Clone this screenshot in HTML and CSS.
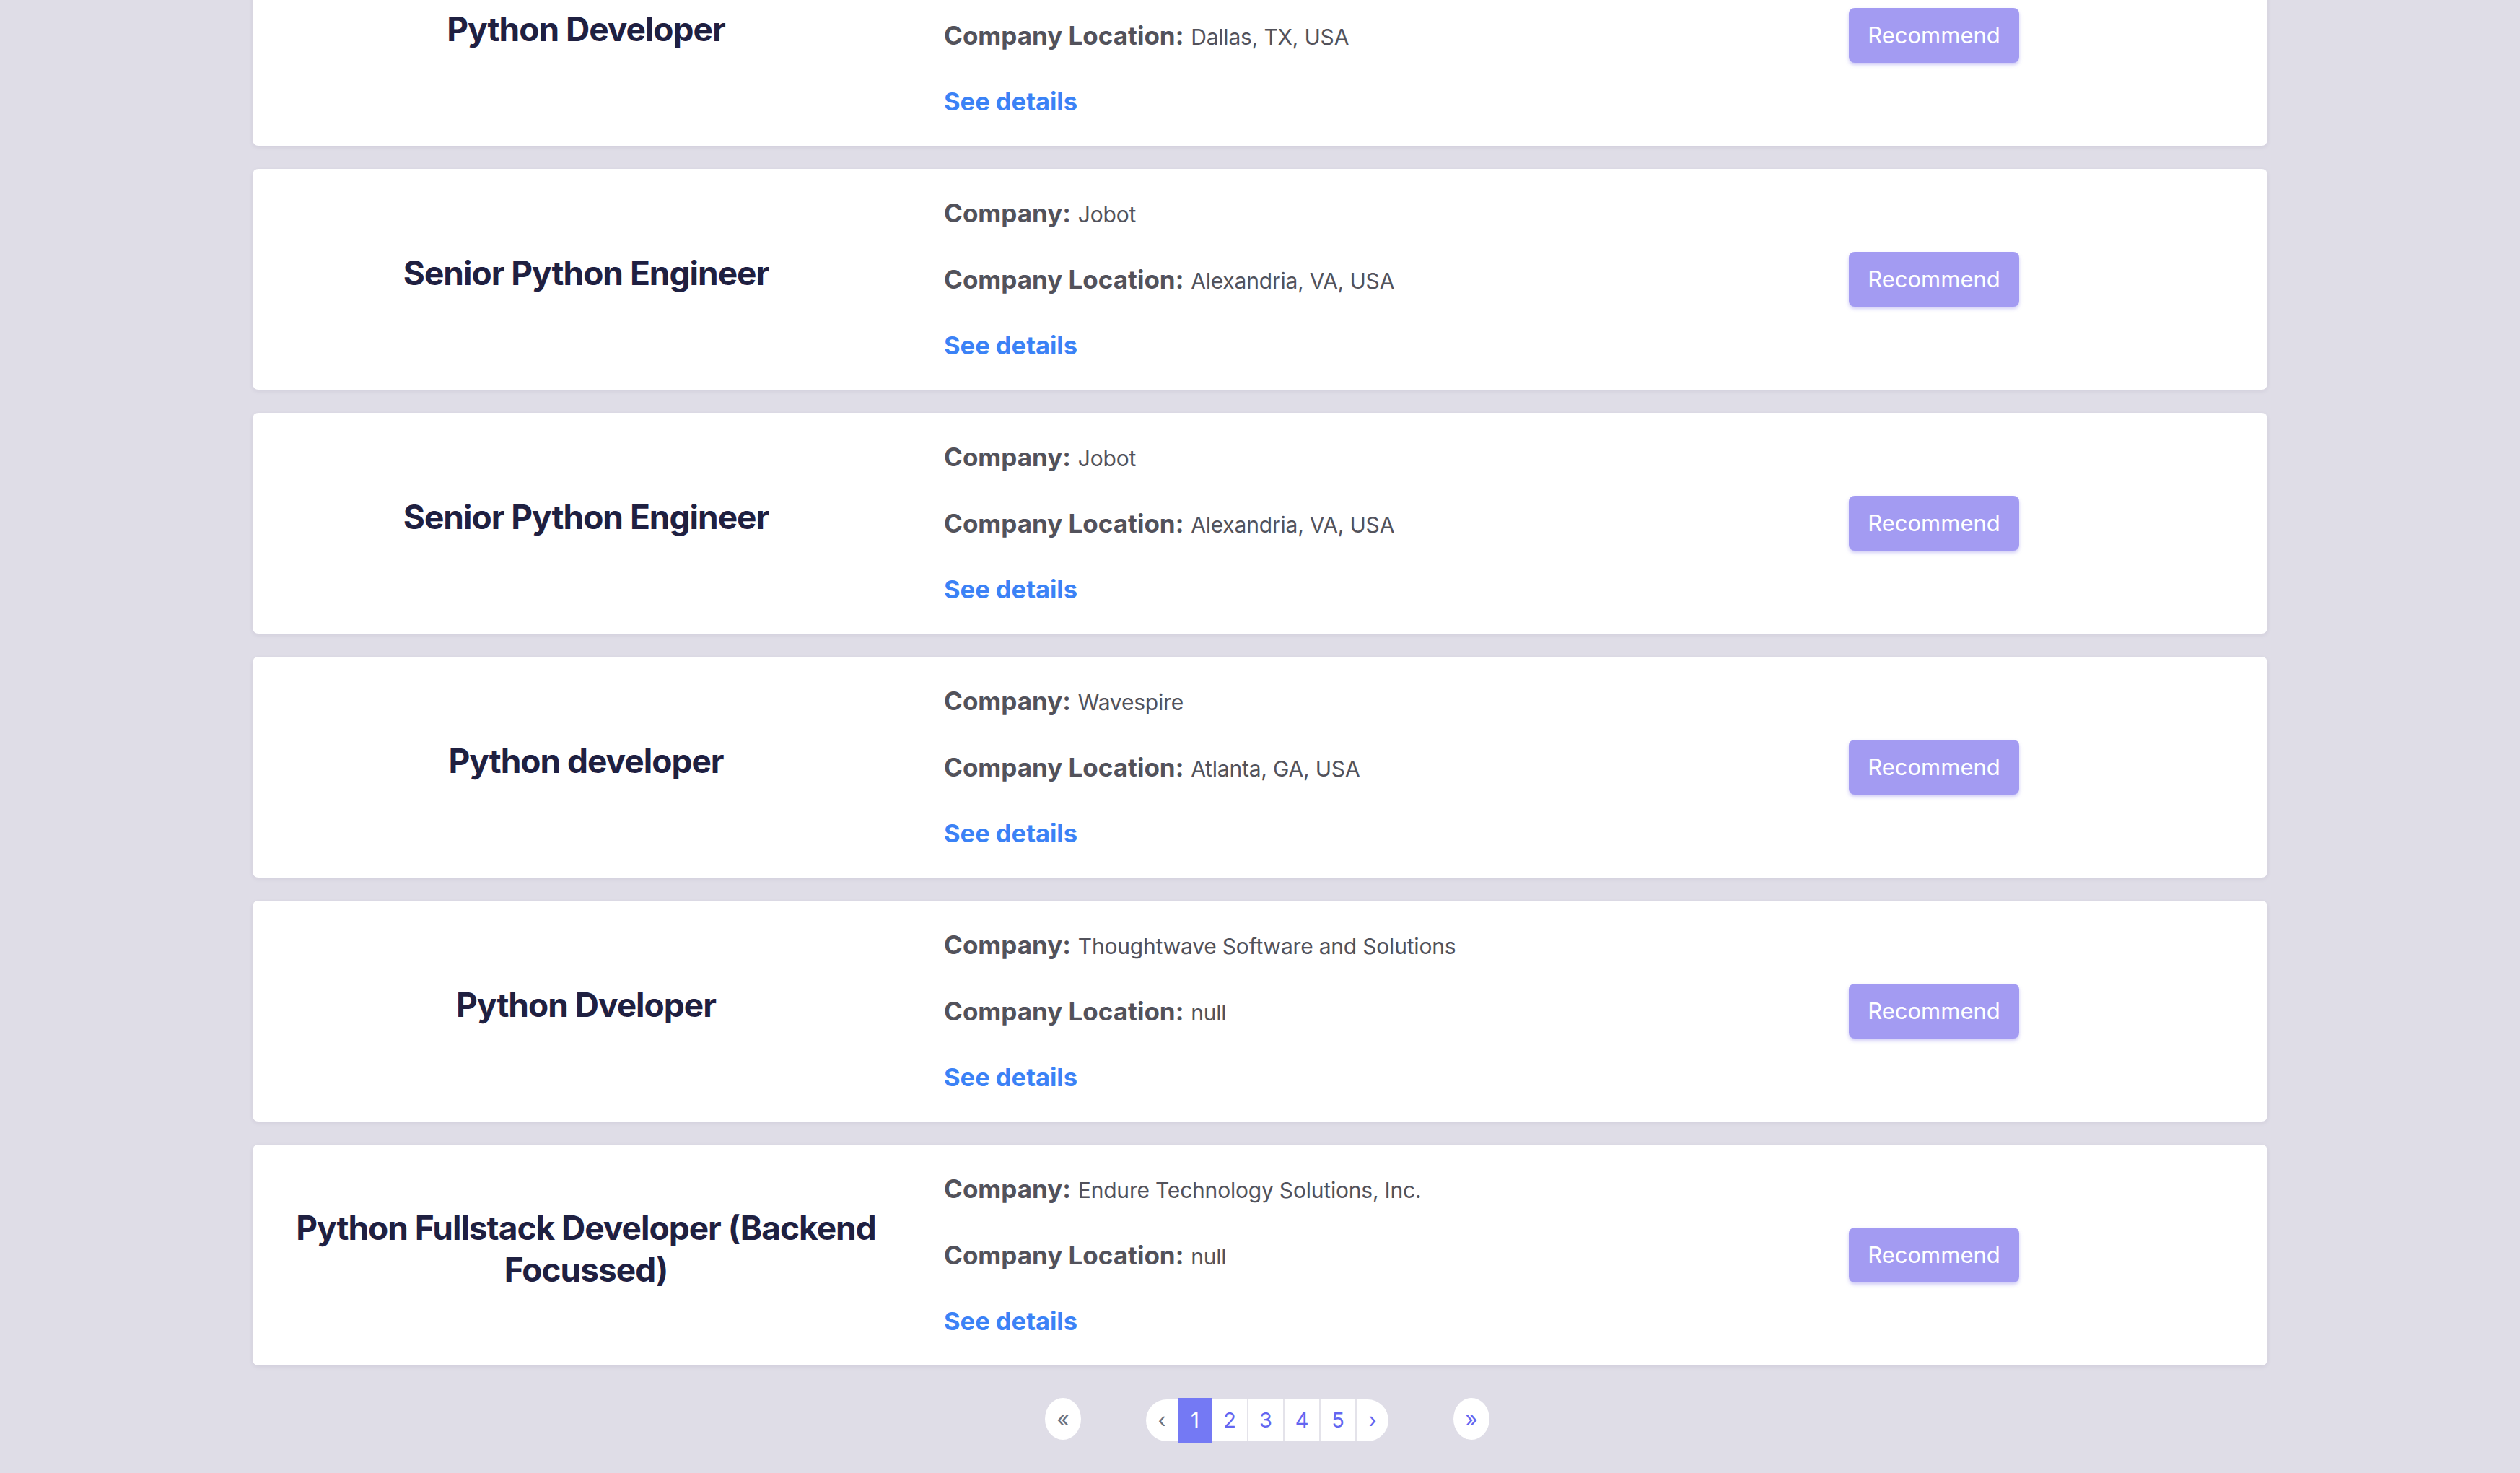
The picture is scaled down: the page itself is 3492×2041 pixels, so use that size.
FILE: index.html
```html
<!DOCTYPE html>
<html lang="en">
<head>
<meta charset="utf-8">
<title>Jobs</title>
<link rel="stylesheet" href="styles.css">
</head>
<body>
<main class="jobs">
  <section class="card">
    <div class="col-title"><h3 class="title">Python Developer</h3></div>
    <div class="col-info">
      <p class="line"><span class="label">Company:</span> <span class="value">Jobot</span></p>
      <p class="line"><span class="label">Company Location:</span> <span class="value">Dallas, TX, USA</span></p>
      <a class="details" href="#">See details</a>
    </div>
    <div class="col-action"><button class="recommend">Recommend</button></div>
  </section>
  <section class="card">
    <div class="col-title"><h3 class="title">Senior Python Engineer</h3></div>
    <div class="col-info">
      <p class="line"><span class="label">Company:</span> <span class="value">Jobot</span></p>
      <p class="line"><span class="label">Company Location:</span> <span class="value">Alexandria, VA, USA</span></p>
      <a class="details" href="#">See details</a>
    </div>
    <div class="col-action"><button class="recommend">Recommend</button></div>
  </section>
  <section class="card">
    <div class="col-title"><h3 class="title">Senior Python Engineer</h3></div>
    <div class="col-info">
      <p class="line"><span class="label">Company:</span> <span class="value">Jobot</span></p>
      <p class="line"><span class="label">Company Location:</span> <span class="value">Alexandria, VA, USA</span></p>
      <a class="details" href="#">See details</a>
    </div>
    <div class="col-action"><button class="recommend">Recommend</button></div>
  </section>
  <section class="card">
    <div class="col-title"><h3 class="title">Python developer</h3></div>
    <div class="col-info">
      <p class="line"><span class="label">Company:</span> <span class="value">Wavespire</span></p>
      <p class="line"><span class="label">Company Location:</span> <span class="value">Atlanta, GA, USA</span></p>
      <a class="details" href="#">See details</a>
    </div>
    <div class="col-action"><button class="recommend">Recommend</button></div>
  </section>
  <section class="card">
    <div class="col-title"><h3 class="title">Python Dveloper</h3></div>
    <div class="col-info">
      <p class="line"><span class="label">Company:</span> <span class="value">Thoughtwave Software and Solutions</span></p>
      <p class="line"><span class="label">Company Location:</span> <span class="value">null</span></p>
      <a class="details" href="#">See details</a>
    </div>
    <div class="col-action"><button class="recommend">Recommend</button></div>
  </section>
  <section class="card">
    <div class="col-title"><h3 class="title">Python Fullstack Developer (Backend Focussed)</h3></div>
    <div class="col-info">
      <p class="line"><span class="label">Company:</span> <span class="value">Endure Technology Solutions, Inc.</span></p>
      <p class="line"><span class="label">Company Location:</span> <span class="value">null</span></p>
      <a class="details" href="#">See details</a>
    </div>
    <div class="col-action"><button class="recommend">Recommend</button></div>
  </section>

  <nav class="pagination">
    <button class="circle first">&laquo;</button>
    <div class="pages">
      <button class="page prev">&lsaquo;</button>
      <button class="page active">1</button>
      <button class="page">2</button>
      <button class="page">3</button>
      <button class="page">4</button>
      <button class="page">5</button>
      <button class="page next">&rsaquo;</button>
    </div>
    <button class="circle last">&raquo;</button>
  </nav>
</main>
</body>
</html>
```

FILE: styles.css
```css
* { box-sizing: border-box; }

html, body {
  margin: 0;
  padding: 0;
  background: #dfdde7;
  font-family: Inter, "Noto Sans", "Liberation Sans", sans-serif;
}

.jobs {
  width: 2792px;
  margin: -104px auto 0;
  display: flex;
  flex-direction: column;
  gap: 32px;
}

.card {
  background: #ffffff;
  border-radius: 8px;
  box-shadow: 0 2px 6px rgba(40, 30, 80, 0.08);
  display: grid;
  grid-template-columns: repeat(3, 1fr);
  column-gap: 58px;
  padding: 33px 24px;
  align-items: center;
}

.col-title {
  text-align: center;
}

.title {
  margin: 0 0 19px;
  font-size: 46px;
  line-height: 58px;
  letter-spacing: -1px;
  font-weight: 700;
  color: #1f2041;
}

.col-info {
  display: flex;
  flex-direction: column;
  gap: 36px;
}

.line {
  margin: 0;
  height: 56px;
  font-size: 35px;
  line-height: 56px;
  color: #52525b;
  white-space: nowrap;
}

.label {
  font-weight: 700;
}

.value {
  font-size: 30px;
  line-height: 1;
  letter-spacing: -0.2px;
  color: #52525b;
}

.details {
  height: 56px;
  font-size: 34.5px;
  line-height: 56px;
  font-weight: 700;
  color: #3b82f6;
  text-decoration: none;
  align-self: flex-start;
}

.col-action {
  display: flex;
  justify-content: center;
}

.recommend {
  font-family: inherit;
  font-size: 31px;
  line-height: 40px;
  padding: 18px 26px;
  border: 0;
  border-radius: 8px;
  background: #a39bf2;
  color: #ffffff;
  box-shadow: 0 3px 5px rgba(120, 110, 230, 0.35);
}

.pagination {
  margin-top: 15px;
  padding-left: 20px;
  height: 150px;
  display: flex;
  justify-content: center;
  align-items: flex-start;
  gap: 90px;
}

.pagination button {
  font-family: inherit;
  border: 0;
  padding: 0;
  cursor: pointer;
}

.circle {
  width: 50px;
  height: 58px;
  border-radius: 50%;
  background: #ffffff;
  font-size: 30px;
  line-height: 58px;
  margin-top: -2px;
}

.first { color: #6b7280; }
.last { color: #6366f1; }

.pages {
  display: flex;
  height: 58px;
}

.page {
  width: 50px;
  height: 58px;
  background: #ffffff;
  color: #6366f1;
  font-size: 29px;
  line-height: 58px;
  border-right: 2px solid #e4e3ea !important;
}

.page.prev {
  width: 44px;
  color: #6b7280;
  border-right: 0 !important;
  border-radius: 29px 0 0 29px;
}

.page.next {
  width: 44px;
  border-right: 0 !important;
  border-radius: 0 29px 29px 0;
}

.page.active {
  width: 48px;
  height: 62px;
  margin-top: -2px;
  background: #7479f4;
  color: #ffffff;
  border-right: 0 !important;
}
```
